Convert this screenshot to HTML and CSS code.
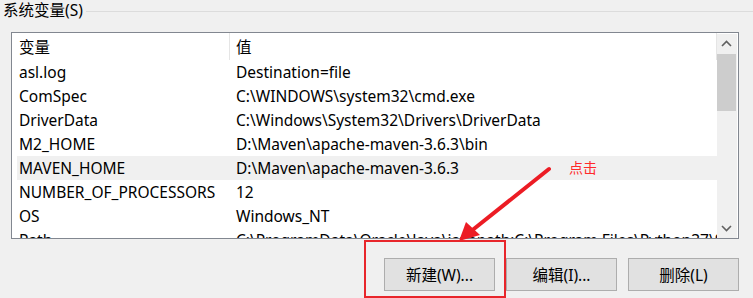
FILE: index.html
```html
<!DOCTYPE html>
<html lang="zh-CN">
<head>
  <meta charset="UTF-8">
  <title>系统变量</title>
  <link rel="stylesheet" href="styles.css">
</head>
<body>
  <div class="group-title">
    <span class="caption">系统变量(S)</span>
    <span class="rule"></span>
  </div>

  <div class="listbox">
    <div class="list">
      <div class="head">
        <span>变量</span>
        <i class="divider"></i>
        <span class="val">值</span>
        <i class="divider end"></i>
      </div>
      <div class="row"><span>asl.log</span><span>Destination=file</span></div>
      <div class="row"><span>ComSpec</span><span>C:\WINDOWS\system32\cmd.exe</span></div>
      <div class="row"><span>DriverData</span><span>C:\Windows\System32\Drivers\DriverData</span></div>
      <div class="row"><span>M2_HOME</span><span>D:\Maven\apache-maven-3.6.3\bin</span></div>
      <div class="row selected"><span>MAVEN_HOME</span><span>D:\Maven\apache-maven-3.6.3</span></div>
      <div class="row"><span>NUMBER_OF_PROCESSORS</span><span>12</span></div>
      <div class="row"><span>OS</span><span>Windows_NT</span></div>
      <div class="row"><span>Path</span><span>C:\ProgramData\Oracle\Java\javapath;C:\Program Files\Python37\Scripts\</span></div>
    </div>
    <div class="scrollbar">
      <svg class="arrow-btn" width="20" height="20" viewBox="0 0 20 20"><polyline points="5,12 9.5,7.5 14,12" fill="none" stroke="#606060" stroke-width="1.6"/></svg>
      <div class="thumb"></div>
      <div class="track"></div>
      <svg class="arrow-btn" width="20" height="20" viewBox="0 0 20 20"><polyline points="5,8 9.5,12.5 14,8" fill="none" stroke="#606060" stroke-width="1.6"/></svg>
    </div>
  </div>

  <div class="buttons">
    <button>新建(W)...</button>
    <button>编辑(I)...</button>
    <button>删除(L)</button>
  </div>

  <!-- annotation drawn over the dialog -->
  <svg class="pointer" width="753" height="298" viewBox="0 0 753 298">
    <line x1="549" y1="169" x2="470" y2="232" stroke="#ec1c24" stroke-width="4" stroke-linecap="round"/>
    <polygon points="459,241 466,222 480,235" fill="#ec1c24"/>
  </svg>
  <span class="note">点击</span>
  <div class="highlight-box"></div>
</body>
</html>
```

FILE: styles.css
```css
body {
  margin: 0;
  width: 753px;
  height: 298px;
  background: #f0f0f0;
  font-family: "Noto Sans", "Noto Sans CJK SC", sans-serif;
  font-size: 15.5px;
  color: #000;
  position: relative;
  overflow: hidden;
}
.group-title {
  display: flex;
  align-items: center;
  height: 20px;
  padding-left: 3px;
}
.caption {
  line-height: 20px;
  padding-right: 3px;
}
.rule {
  flex: 1;
  border-top: 1px solid #dcdcdc;
  margin-top: 2px;
}
.listbox {
  display: flex;
  width: 726px;
  height: 205px;
  margin: 12px 0 0 11px;
  border: 1px solid #828790;
  background: #fff;
  overflow: hidden;
}
.list {
  flex: 1;
  overflow: hidden;
}
.head {
  display: grid;
  grid-template-columns: 210px 1px 1fr 1px;
  align-items: center;
  height: 27px;
  padding-left: 7px;
}
.head .val {
  padding-left: 6px;
}
.divider {
  height: 27px;
  background: #e5e5e5;
}
.row {
  display: grid;
  grid-template-columns: 217px 1fr;
  align-items: center;
  height: 24px;
  margin-left: 5px;
  padding-left: 2px;
  white-space: nowrap;
  overflow: hidden;
}
.row.selected {
  background: #f0f0f0;
}
.scrollbar {
  width: 20px;
  margin: 1px 1px 0 0;
  background: #f0f0f0;
  display: flex;
  flex-direction: column;
}
.arrow-btn {
  display: block;
  flex: none;
}
.thumb {
  height: 57px;
  background: #cdcdcd;
  margin-right: 1px;
}
.track {
  flex: 1;
}
.buttons {
  display: flex;
  justify-content: flex-end;
  gap: 11px;
  margin-top: 19px;
  padding-right: 14px;
}
button {
  width: 111px;
  height: 33px;
  background: #e1e1e1;
  border: 1px solid #adadad;
  font-family: "Noto Sans", "Noto Sans CJK SC", sans-serif;
  font-size: 15.5px;
  color: #000;
  padding: 0;
}
.pointer {
  position: absolute;
  left: 0;
  top: 0;
  pointer-events: none;
}
.note {
  position: absolute;
  left: 569px;
  top: 157px;
  font-family: "Noto Sans CJK SC", sans-serif;
  font-size: 14px;
  color: #ff2a2a;
}
.highlight-box {
  position: absolute;
  left: 364px;
  top: 240px;
  width: 138px;
  height: 54px;
  border: 2px solid #e8262b;
}
```
